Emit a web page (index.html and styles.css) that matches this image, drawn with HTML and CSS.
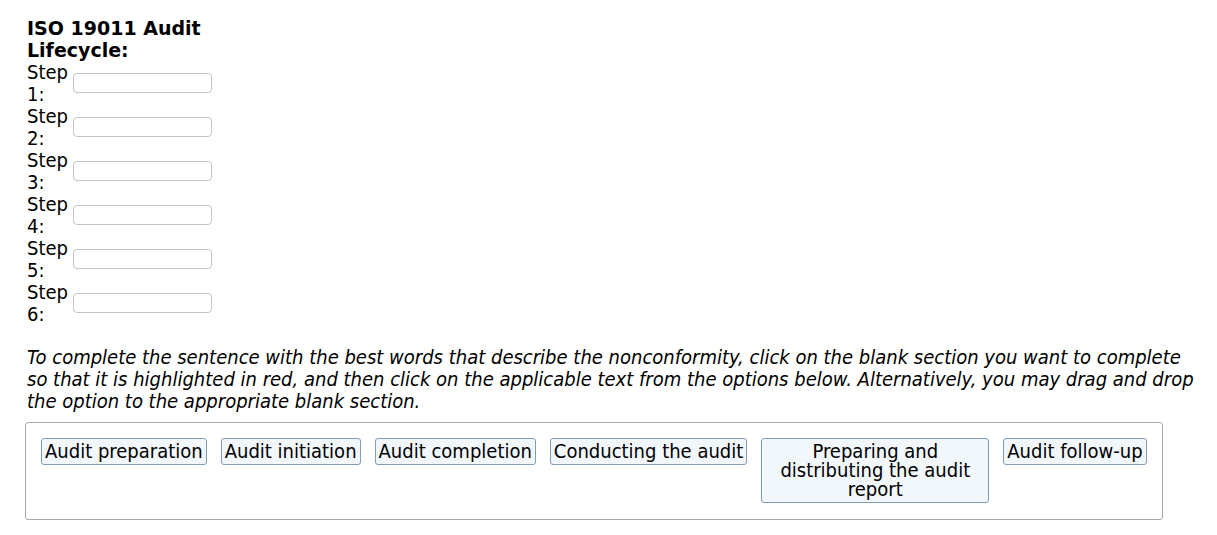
FILE: index.html
```html
<!DOCTYPE html>
<html lang="en">
<head>
    <meta charset="UTF-8">
    <title>ISO 19011 Audit Lifecycle</title>
    <link rel="stylesheet" href="styles.css">
</head>
<body>

    <!-- Các bước của vòng đời đánh giá -->
    <div class="lifecycle">
        <h3 class="lifecycle-title">ISO 19011 Audit Lifecycle:</h3>
        <div class="step-row">
            <label class="step-label" for="step1">Step 1:</label>
            <input type="text" id="step1" class="step-input">
        </div>
        <div class="step-row">
            <label class="step-label" for="step2">Step 2:</label>
            <input type="text" id="step2" class="step-input">
        </div>
        <div class="step-row">
            <label class="step-label" for="step3">Step 3:</label>
            <input type="text" id="step3" class="step-input">
        </div>
        <div class="step-row">
            <label class="step-label" for="step4">Step 4:</label>
            <input type="text" id="step4" class="step-input">
        </div>
        <div class="step-row">
            <label class="step-label" for="step5">Step 5:</label>
            <input type="text" id="step5" class="step-input">
        </div>
        <div class="step-row">
            <label class="step-label" for="step6">Step 6:</label>
            <input type="text" id="step6" class="step-input">
        </div>
    </div>

    <p class="instructions">To complete the sentence with the best words that describe the nonconformity, click on the blank section you want to complete so that it is highlighted in red, and then click on the applicable text from the options below. Alternatively, you may drag and drop the option to the appropriate blank section.</p>

    <!-- Các lựa chọn -->
    <div class="options">
        <button class="option">Audit preparation</button>
        <button class="option">Audit initiation</button>
        <button class="option">Audit completion</button>
        <button class="option">Conducting the audit</button>
        <button class="option option-wide">Preparing and distributing the audit report</button>
        <button class="option">Audit follow-up</button>
    </div>

</body>
</html>
```

FILE: styles.css
```css
body {
    font-family: "DejaVu Sans Condensed", "DejaVu Sans", sans-serif;
    font-size: 20px;
    color: #000;
    margin: 0;
    padding: 17px 17px 17px 27px;
}

/* Vòng đời */
.lifecycle {
    width: 185px;
}

.lifecycle-title {
    font-family: "DejaVu Sans", sans-serif;
    font-size: 19px;
    line-height: 22px;
    margin: 0;
}

.step-row {
    display: flex;
    align-items: center;
    gap: 4px;
}

.step-label {
    width: 42px;
    line-height: 22px;
}

.step-input {
    width: 139px;
    height: 20px;
    box-sizing: border-box;
    border: 1px solid #c4c4c4;
    border-radius: 4px;
    padding: 0 4px;
}

/* Hướng dẫn */
.instructions {
    font-style: italic;
    line-height: 22px;
    margin: 21px 0 10px;
}

/* Khung lựa chọn */
.options {
    display: flex;
    align-items: flex-start;
    gap: 14px;
    width: 1106px;
    height: 66px;
    padding: 15px;
    border: 1px solid #aaa;
    border-radius: 3px;
    margin-left: -2px;
}

.option {
    font-family: "DejaVu Sans Condensed", "DejaVu Sans", sans-serif;
    font-size: 20px;
    line-height: 19px;
    padding: 3px 3px;
    background-color: #f2f7fc;
    border: 1px solid #7f9db9;
    border-radius: 3px;
    color: #000;
    cursor: pointer;
}

.option-wide {
    width: 228px;
    text-align: center;
}
```
